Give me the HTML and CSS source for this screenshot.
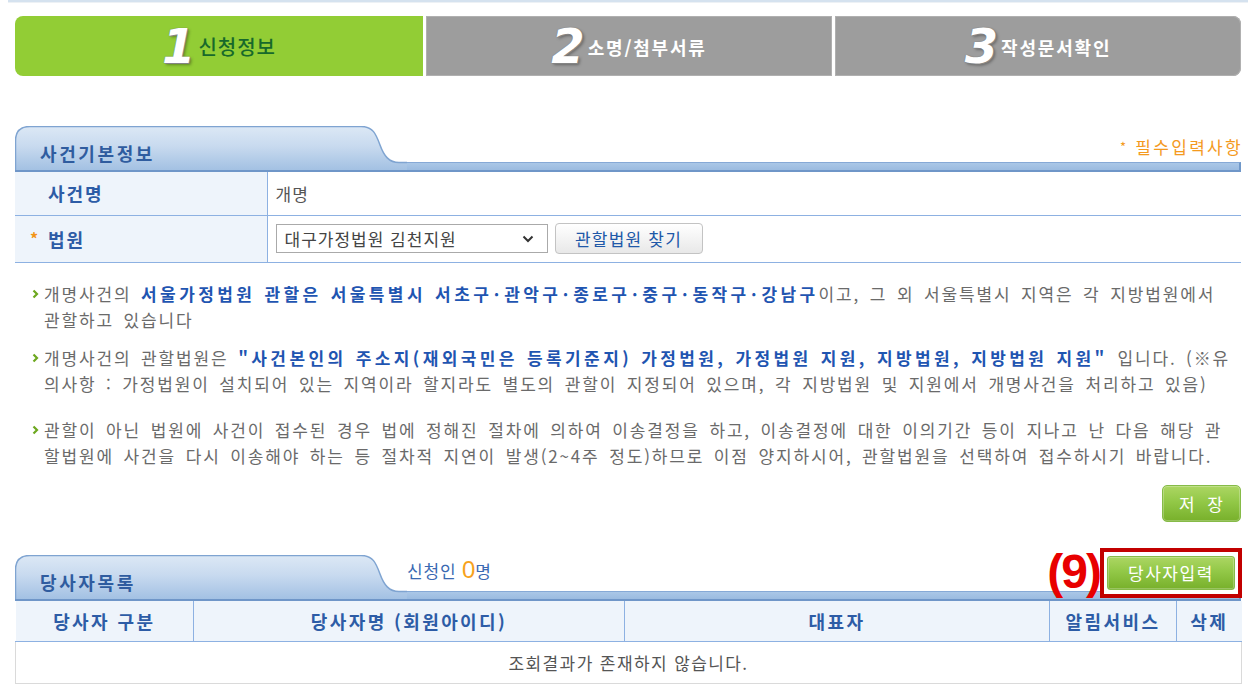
FILE: index.html
```html
<!DOCTYPE html>
<html lang="ko">
<head>
<meta charset="utf-8">
<title>개명 신청 - 신청정보</title>
<link rel="stylesheet" href="styles.css">
</head>
<body>
<div class="topline"></div>
<div class="wrap">
  <ol class="steps">
    <li class="step on"><span class="num">1</span><span class="lbl">신청정보</span></li>
    <li class="step"><span class="num">2</span><span class="lbl">소명/첨부서류</span></li>
    <li class="step last"><span class="num">3</span><span class="lbl">작성문서확인</span></li>
  </ol>

  <div class="sec-head s1">
    <div class="tab">
      <svg class="tab-bg" width="392" height="46" viewBox="0 0 392 46">
        <defs>
          <linearGradient id="tg1" x1="0" y1="0" x2="0" y2="1">
            <stop offset="0" stop-color="#dce8f5"/>
            <stop offset="0.45" stop-color="#c8daef"/>
            <stop offset="1" stop-color="#a3c1e3"/>
          </linearGradient>
        </defs>
        <path d="M0.5,44 V15 Q0.5,0.5 15,0.5 H346 C358,0.5 361,8 365,19 C369,30 374,36.5 384,36.5 H392 V44 Z" fill="url(#tg1)"/>
        <path d="M0.5,44 V15 Q0.5,0.5 15,0.5 H346 C358,0.5 361,8 365,19 C369,30 374,36.5 384,36.5 H392" fill="none" stroke="#7fa4d1" stroke-width="1.5"/>
      </svg>
      <h2 class="tab-title">사건기본정보</h2>
    </div>
    <div class="side side-r">
      <span class="req"><span class="req-star">*</span> 필수입력사항</span>
    </div>
    <div class="bar"></div>
  </div>

  <table class="form">
    <tr class="r1">
      <th>사건명</th>
      <td>개명</td>
    </tr>
    <tr class="r2">
      <th><span class="star">*</span>법원</th>
      <td>
        <div class="court">
          <span class="sel-wrap">
            <select class="sel">
              <option>대구가정법원 김천지원</option>
            </select>
            <svg class="chev" width="12" height="8" viewBox="0 0 12 8"><polyline points="1.5,1.5 6,6 10.5,1.5" fill="none" stroke="#333" stroke-width="2"/></svg>
          </span>
          <button class="btn-gray" type="button">관할법원 찾기</button>
        </div>
      </td>
    </tr>
  </table>

  <div class="notes">
    <p class="note n1"><svg class="arr" width="7" height="10" viewBox="0 0 7 10"><polyline points="1.5,1.5 5,5 1.5,8.5" fill="none" stroke="#6da81f" stroke-width="2.2"/></svg><span class="txt">개명사건의 <b>서울가정법원 관할은 서울특별시 서초구<span class="md">·</span>관악구<span class="md">·</span>종로구<span class="md">·</span>중구<span class="md">·</span>동작구<span class="md">·</span>강남구</b>이고, 그 외 서울특별시 지역은 각 지방법원에서<br>관할하고 있습니다</span></p>
    <p class="note n2"><svg class="arr" width="7" height="10" viewBox="0 0 7 10"><polyline points="1.5,1.5 5,5 1.5,8.5" fill="none" stroke="#6da81f" stroke-width="2.2"/></svg><span class="txt">개명사건의 관할법원은 <b>"사건본인의 주소지(재외국민은 등록기준지) 가정법원, 가정법원 지원, 지방법원, 지방법원 지원"</b> 입니다. (※유<br>의사항 : 가정법원이 설치되어 있는 지역이라 할지라도 별도의 관할이 지정되어 있으며, 각 지방법원 및 지원에서 개명사건을 처리하고 있음)</span></p>
    <p class="note n3"><svg class="arr" width="7" height="10" viewBox="0 0 7 10"><polyline points="1.5,1.5 5,5 1.5,8.5" fill="none" stroke="#6da81f" stroke-width="2.2"/></svg><span class="txt">관할이 아닌 법원에 사건이 접수된 경우 법에 정해진 절차에 의하여 이송결정을 하고, 이송결정에 대한 이의기간 등이 지나고 난 다음 해당 관<br>할법원에 사건을 다시 이송해야 하는 등 절차적 지연이 발생(2~4주 정도)하므로 이점 양지하시어, 관할법원을 선택하여 접수하시기 바랍니다.</span></p>
  </div>

  <div class="actions">
    <button class="btn-green save" type="button">저 장</button>
  </div>

  <div class="sec-head s2">
    <div class="tab">
      <svg class="tab-bg" width="392" height="46" viewBox="0 0 392 46">
        <defs>
          <linearGradient id="tg2" x1="0" y1="0" x2="0" y2="1">
            <stop offset="0" stop-color="#dce8f5"/>
            <stop offset="0.45" stop-color="#c8daef"/>
            <stop offset="1" stop-color="#a3c1e3"/>
          </linearGradient>
        </defs>
        <path d="M0.5,44 V15 Q0.5,0.5 15,0.5 H346 C358,0.5 361,8 365,19 C369,30 374,36.5 384,36.5 H392 V44 Z" fill="url(#tg2)"/>
        <path d="M0.5,44 V15 Q0.5,0.5 15,0.5 H346 C358,0.5 361,8 365,19 C369,30 374,36.5 384,36.5 H392" fill="none" stroke="#7fa4d1" stroke-width="1.5"/>
      </svg>
      <h2 class="tab-title">당사자목록</h2>
    </div>
    <div class="side side-l">
      <span class="count">신청인 <em class="zero">0</em>명</span>
      <span class="annot">
        <span class="annot-no">(9)</span>
        <button class="btn-green add" type="button">당사자입력</button>
      </span>
    </div>
    <div class="bar"></div>
  </div>

  <table class="list">
    <colgroup>
      <col class="c1"><col class="c2"><col class="c3"><col class="c4"><col class="c5">
    </colgroup>
    <thead>
      <tr>
        <th>당사자 구분</th>
        <th>당사자명 (회원아이디)</th>
        <th>대표자</th>
        <th>알림서비스</th>
        <th>삭제</th>
      </tr>
    </thead>
    <tbody>
      <tr>
        <td colspan="5" class="empty">조회결과가 존재하지 않습니다.</td>
      </tr>
    </tbody>
  </table>
</div>
</body>
</html>
```

FILE: styles.css
```css
* { box-sizing: border-box; }

body {
  margin: 0;
  background: #fff;
  color: #666;
  font-family: "Noto Sans CJK KR", "Noto Sans", sans-serif;
}

.topline {
  height: 3px;
  margin: 0 8px;
  background: #d5e2ef;
  border-bottom: 1px solid #edf1f5;
}

.wrap {
  width: 1226px;
  margin-left: 15px;
}

/* steps */
.steps {
  list-style: none;
  margin: 13px 0 0;
  padding: 0;
  display: grid;
  grid-template-columns: 408px 1fr 406px;
  gap: 3px;
  height: 60px;
}
.step {
  display: flex;
  align-items: center;
  justify-content: center;
  background: #9d9d9d;
  box-shadow: inset 0 0 0 1px #b0b0b0;
}
.step.on {
  background: #92cd35;
  box-shadow: none;
  border-radius: 8px 0 0 8px;
}
.step.last { border-radius: 0 8px 8px 0; }
.num {
  font-family: "DejaVu Sans", sans-serif;
  font-style: italic;
  font-weight: 700;
  font-size: 48px;
  line-height: 52px;
  color: #fff;
  text-shadow: 0 0 1px #666, 1px 1px 0 #888, 2px 2px 3px rgba(0,0,0,.35);
  margin-right: 3px;
}
.lbl {
  font-size: 18px;
  font-weight: 700;
  letter-spacing: 1.8px;
  color: #fff;
  padding-top: 2px;
}
.step.on .lbl {
  font-size: 20px;
  font-weight: 500;
  letter-spacing: 1px;
  color: #17692b;
  padding-top: 0;
}

/* section heads */
.sec-head {
  display: grid;
  grid-template-columns: 392px 1fr;
  grid-template-rows: 36px 10px;
  position: relative;
}
.s1 { margin-top: 50px; }
.s2 { margin-top: 33px; }
.tab {
  grid-column: 1;
  grid-row: 1 / 3;
  position: relative;
  z-index: 1;
}
.tab-bg { position: absolute; left: 0; top: 0; }
.tab-title {
  position: relative;
  margin: 0;
  padding: 16px 0 0 25px;
  font-size: 18px;
  line-height: 22px;
  font-weight: 700;
  letter-spacing: 2.6px;
  color: #2f5c9f;
}
.bar {
  grid-column: 1 / 3;
  grid-row: 2;
  background: linear-gradient(#aac7e7, #9bbbe0);
  border-top: 1px solid #86a9d6;
  border-bottom: 2px solid #6f96c8;
  border-right: 2px solid #7098c9;
}
.side {
  grid-column: 2;
  grid-row: 1;
  display: flex;
  align-items: center;
}
.side-r { justify-content: flex-end; padding-top: 4px; }
.req {
  font-size: 17px;
  letter-spacing: 2.3px;
  color: #f49a1e;
  margin-right: -2px;
}
.req-star { font-size: 13px; vertical-align: 2px; }

.side-l { justify-content: space-between; padding-top: 0; }
.count {
  font-size: 17px;
  letter-spacing: 0.8px;
  color: #3a69b2;
  margin-top: -6px;
}
.zero {
  font-style: normal;
  font-family: "Liberation Sans", sans-serif;
  font-size: 24px;
  color: #f7a21c;
  letter-spacing: 0;
}

/* annotation */
.annot {
  position: absolute;
  right: -1px;
  top: -7px;
  border: 4px solid #c20000;
  padding: 4px 3px;
  background: #fff;
  z-index: 2;
}
.annot-no {
  position: absolute;
  right: calc(100% + 4px);
  top: -7px;
  font-family: "Liberation Sans", sans-serif;
  font-weight: 700;
  font-size: 48px;
  line-height: 54px;
  color: #e80000;
  letter-spacing: -2px;
}

/* buttons */
.btn-green {
  display: block;
  border: 1px solid #86bb48;
  border-radius: 5px;
  background: linear-gradient(#acd663 0%, #92c847 45%, #78b02b 100%);
  box-shadow: inset 0 0 0 1px rgba(255,255,255,.25);
  color: #fff;
  font-family: inherit;
  font-size: 17px;
  padding: 0;
  cursor: pointer;
}
.save {
  width: 79px;
  height: 37px;
  letter-spacing: 1px;
  word-spacing: 6px;
}
.add {
  width: 128px;
  height: 34px;
  border-radius: 3px;
  letter-spacing: 1.6px;
}
.btn-gray {
  width: 148px;
  height: 31px;
  margin-left: 7px;
  border: 1px solid #c3c3c3;
  border-radius: 4px;
  background: linear-gradient(#ffffff, #e8e8e8);
  color: #2058a8;
  font-family: inherit;
  font-size: 17px;
  letter-spacing: 1.2px;
  padding: 0;
}

/* form table */
.form {
  width: 100%;
  border-collapse: collapse;
  table-layout: fixed;
}
.form th {
  width: 252px;
  background: #eef4fb;
  border-right: 1px solid #8db1e2;
  border-bottom: 1px solid #8db1e2;
  text-align: left;
  padding: 0 0 0 33px;
  font-size: 18px;
  font-weight: 700;
  letter-spacing: 2px;
  color: #2d5ca6;
}
.form td {
  border-bottom: 1px solid #8db1e2;
  padding: 0 0 0 8px;
  font-size: 17px;
  letter-spacing: 1px;
  color: #555;
}
.form .r1 { height: 43px; }
.form .r2 { height: 47px; }
.star {
  display: inline-block;
  width: 18px;
  margin-left: -18px;
  color: #f29418;
  font-size: 16px;
  vertical-align: 2px;
}
.court { display: flex; align-items: center; }
.sel-wrap { position: relative; display: block; }
.sel {
  display: block;
  appearance: none;
  -webkit-appearance: none;
  width: 272px;
  height: 29px;
  border: 1px solid #aaa;
  border-radius: 0;
  background: #fff;
  padding: 0 0 0 8px;
  font-family: inherit;
  font-size: 17px;
  letter-spacing: 1px;
  color: #444;
}
.chev {
  position: absolute;
  right: 14px;
  top: 11px;
  pointer-events: none;
}

/* notes */
.notes { margin-top: 18px; }
.note {
  display: flex;
  margin: 0;
  padding-left: 17px;
  font-size: 17px;
  line-height: 26px;
  letter-spacing: 1.85px;
  word-spacing: 3px;
  color: #6a6a6a;
  white-space: nowrap;
}
.n2 { margin-top: 12px; }
.n3 { margin-top: 20px; }
.arr {
  flex: none;
  margin: 8px 5px 0 0;
}
.note b {
  font-weight: 700;
  color: #1f55b1;
  letter-spacing: 3.4px;
  word-spacing: 1px;
}
.note .md {
  margin: 0 1.5px;
}

.actions {
  display: flex;
  justify-content: flex-end;
  margin-top: 16px;
}

/* list table */
.list {
  width: 100%;
  border-collapse: collapse;
  table-layout: fixed;
}
.c1 { width: 178px; }
.c2 { width: 431px; }
.c3 { width: 425px; }
.c4 { width: 127px; }
.c5 { width: 65px; }
.list th {
  height: 41px;
  background: #eef4fb;
  border-left: 1px solid #8db1e2;
  border-bottom: 1px solid #8db1e2;
  font-size: 18px;
  font-weight: 700;
  letter-spacing: 2.4px;
  color: #2d5ca6;
}
.list th:first-child { border-left: 0; }
.empty {
  height: 42px;
  text-align: center;
  border: 1px solid #dadada;
  border-top: 0;
  font-size: 17px;
  letter-spacing: 1.4px;
  color: #555;
}
```
